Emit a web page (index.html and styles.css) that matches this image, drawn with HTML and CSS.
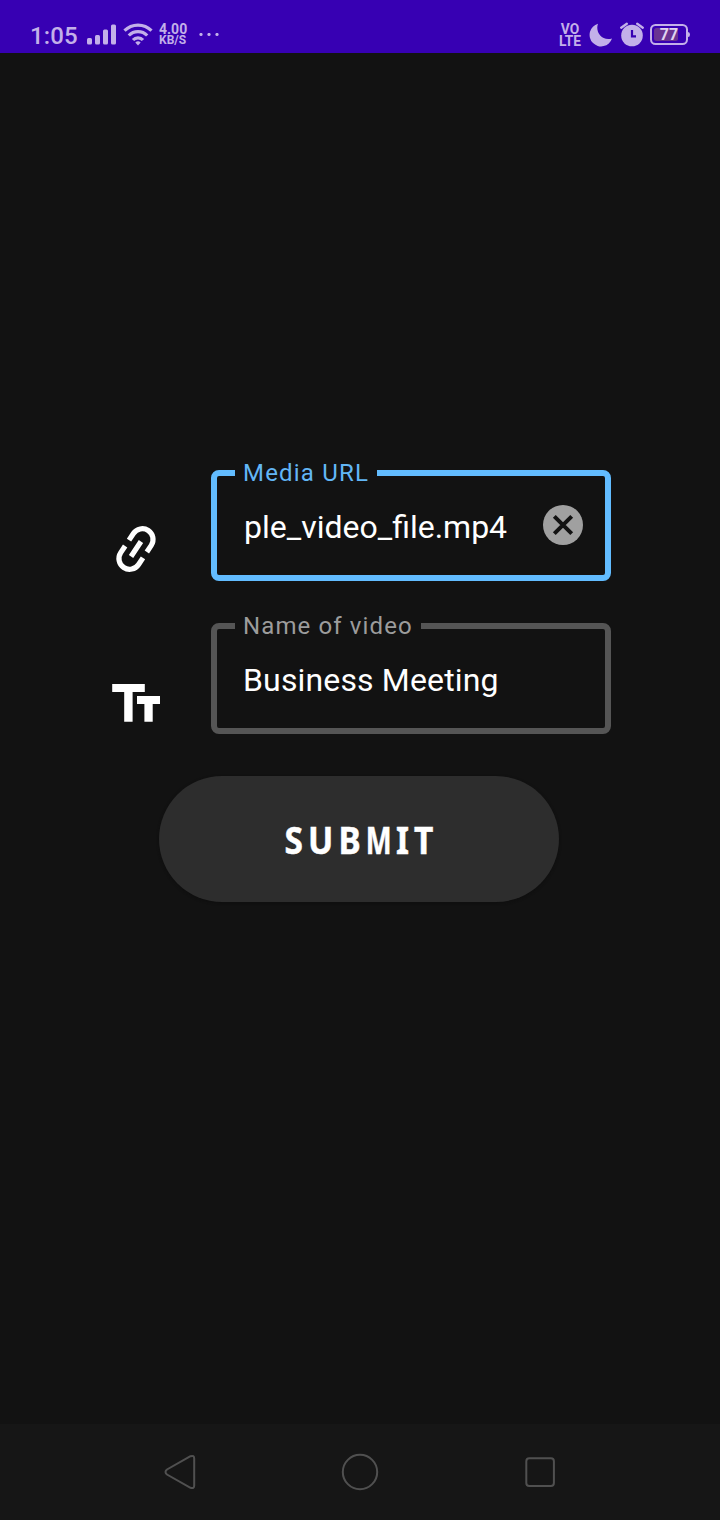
FILE: index.html
```html
<!DOCTYPE html>
<html lang="en">
<head>
<meta charset="utf-8">
<title>Media URL</title>
<link rel="stylesheet" href="styles.css">
</head>
<body>
<div class="screen">
  <header class="status">
    <span class="clock">1:05</span>
    <svg class="signal" width="30" height="22" viewBox="0 0 30 22"><rect x="0" y="14" width="5" height="6.500" rx="1.500"/><rect x="8" y="11" width="5" height="9.500" rx="1.500"/><rect x="16" y="5.500" width="5" height="15" rx="1.500"/><rect x="24" y="0.500" width="5" height="20" rx="1.500"/></svg>
    <svg class="wifi" width="30" height="24" viewBox="0 0 30 24"><g fill="none" stroke="#c3b0e9" stroke-width="3.200"><path d="M1.500 7.700a19 19 0 0 1 27 0"/><path d="M5.800 12.500a12.800 12.800 0 0 1 18.400 0"/><path d="M10 17a6.800 6.800 0 0 1 10 0"/></g><path d="M12.300 19.500a3.800 3.800 0 0 1 5.400 0L15 22.600z"/></svg>
    <span class="speed"><span class="rate">4.00</span><span class="unit">KB/S</span></span>
    <svg class="dots" width="20" height="4" viewBox="0 0 20 4"><circle cx="2" cy="1.500" r="1.600"/><circle cx="10" cy="1.500" r="1.600"/><circle cx="18" cy="1.500" r="1.600"/></svg>
    <span class="volte"><span>VO</span><span>LTE</span></span>
    <svg class="moon" width="24" height="24" viewBox="0 0 24 24"><path d="M9 .8C6 8.500 12.500 18.500 23 15.500A11.500 11.500 0 1 1 9 .8z"/></svg>
    <svg class="alarm" width="25" height="25" viewBox="0 0 25 25"><circle cx="12" cy="13.500" r="10.800"/><path d="M1.200 5.700L6.800 1.700M22.800 5.700l-5.600-4" fill="none" stroke="#c3b0e9" stroke-width="2.300" stroke-linecap="round"/><path d="M12 8v6.300h4" fill="none" stroke="#3700b3" stroke-width="2.200"/></svg>
    <svg class="battery" width="41" height="22" viewBox="0 0 41 22"><rect x="1" y="1" width="36" height="19" rx="4.500" fill="none" stroke="#c3b0e9" stroke-width="2"/><rect x="4" y="4" width="24" height="13" rx="2.500" fill="#693391"/><path d="M38 8q2 0 2 2.500T38 13z"/><text x="19" y="16.200" text-anchor="middle">77</text></svg>
  </header>
  <main class="form">
    <div class="row">
      <svg class="icon" width="50" height="50" viewBox="0 0 50 50"><g transform="translate(25 25) rotate(-56.500)" fill="none" stroke="#fff" stroke-width="5.200"><path d="M-3.500 -10.700h-8a10.700 10.700 0 0 0 0 21.400h8M3.500 -10.700h8a10.700 10.700 0 0 1 0 21.400h-8M-9 0h18"/></g></svg>
      <fieldset class="field active">
        <legend>Media URL</legend>
        <div class="entry"><span class="value url">ple_video_file.mp4</span>
        <svg class="clear" width="40" height="40" viewBox="0 0 40 40"><circle cx="20" cy="20" r="20"/><path d="M11.300 11.300l17.400 17.400M28.700 11.300L11.300 28.700"/></svg></div>
      </fieldset>
    </div>
    <div class="row">
      <svg class="icon" width="50" height="50" viewBox="0 0 50 50"><path fill="#fff" d="M1.200 7h32.600v8H21.600v29.700h-8.400V15h-12zM26 19h23v8h-7.300v17.700h-8.300V27H26z"/></svg>
      <fieldset class="field">
        <legend class="quiet">Name of video</legend>
        <div class="entry"><span class="value name">Business Meeting</span></div>
      </fieldset>
    </div>
    <button class="submit"><span class="caption">SUB<span class="m">M</span>IT</span></button>
  </main>
  <nav class="nav">
    <svg width="180" height="96" viewBox="0 0 180 96"><path d="M100.500 32.200L77 45.500Q74 48 77 50.500L100.500 63.800Q104.200 65 104.200 61.500V34.500Q104.200 31 100.500 32.200z"/></svg>
    <svg width="180" height="96" viewBox="0 0 180 96"><circle cx="90" cy="48" r="17.200"/></svg>
    <svg width="180" height="96" viewBox="0 0 180 96"><rect x="76.300" y="34.300" width="27.600" height="27.600" rx="3"/></svg>
  </nav>
</div>
</body>
</html>
```
FILE: styles.css
```css
* { box-sizing: border-box; }
body { margin: 0; background: #121212; font-family: Roboto, sans-serif; }
svg { display: block; flex: none; }
.screen { width: 720px; height: 1520px; display: flex; flex-direction: column; background: #121212; }
.status { height: 53px; padding: 16px 31px 0 30px; display: flex; align-items: center; background: #3700b3; color: #c3b0e9; fill: #c3b0e9; }
.clock { width: 48px; font-size: 24px; font-weight: 500; line-height: 28px; padding-top: 2px; letter-spacing: .1px; }
.signal { margin-left: 9px; }
.wifi { margin-left: 6px; }
.speed { width: 29px; margin-left: 6px; display: flex; flex-direction: column; font-weight: 700; line-height: 11px; }
.speed .rate { font-size: 14px; }
.speed .unit { font-size: 12px; }
.dots { margin-left: 11px; }
.volte { width: 24px; margin-left: auto; display: flex; flex-direction: column; align-items: center; font-size: 13px; font-weight: 700; line-height: 11px; transform: scale(1.06, 1.12); }
.moon { margin-left: 7px; }
.alarm { margin-left: 7px; }
.battery { margin-left: 5px; margin-right: -2px; }
.battery text { font-size: 16px; font-weight: 700; fill: #e0d3f0; }
.form { flex: 1; padding: 406px 109px 0 111px; display: flex; flex-direction: column; }
.row { display: flex; justify-content: space-between; height: 122px; margin-bottom: 31px; }
.icon { margin-top: 65px; }
.field { width: 400px; height: 122px; margin: 0; padding: 0; border: 6px solid #555; border-radius: 8px; color: #9c9c9c; }
.field legend { height: 28px; line-height: 28px; margin-left: 18px; padding: 0 8px; font-size: 24px; letter-spacing: 1.2px; white-space: nowrap; }
.field .quiet { letter-spacing: 1.12px; }
.active { border-color: #62bcff; color: #62b6f6; }
.entry { height: 76px; padding: 0 22px 0 26px; display: flex; align-items: center; justify-content: space-between; }
.value { padding-top: 4px; color: #fff; font-size: 32px; line-height: 40px; white-space: nowrap; letter-spacing: .15px; }
.url { padding-left: 1px; letter-spacing: 0; }
.clear { fill: #a0a0a0; }
.clear path { stroke: #121212; stroke-width: 4; }
.submit { width: 400px; height: 126px; margin: 11px 0 0 48px; padding: 0; display: flex; align-items: center; justify-content: center; border: 0; border-radius: 63px; background: #2d2d2d; box-shadow: 0 1px 3px #0e0e0e; color: #fff; font: 700 38px "Noto Sans", sans-serif; -webkit-text-stroke: .5px #fff; }
.caption { transform: translate(-1px, -.5px) scaleX(.88); letter-spacing: 5.800px; margin-right: -6px; }
.m { display: inline-block; margin: 0 1.500px 0 -3px; letter-spacing: 0; transform: scaleX(.82); }
.nav { height: 96px; padding: 0 90px; display: flex; background: #161616; fill: none; stroke: #505050; stroke-width: 2; }
```
